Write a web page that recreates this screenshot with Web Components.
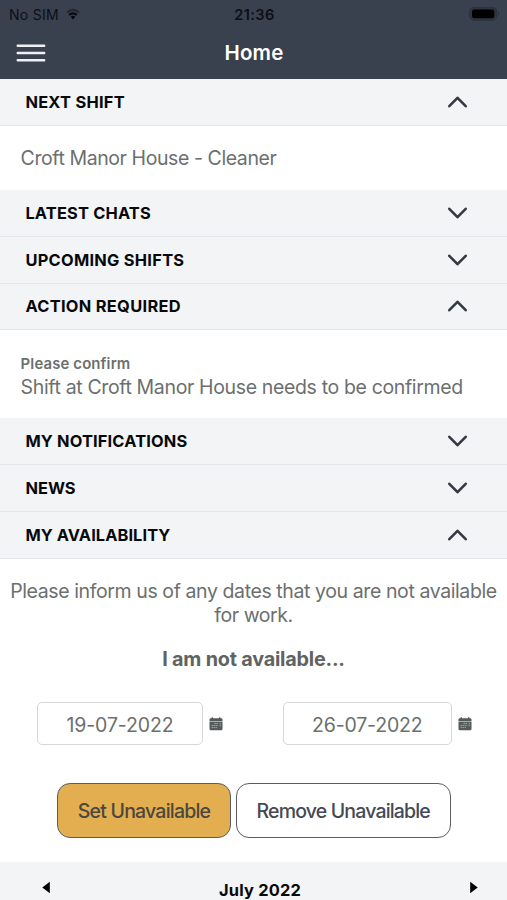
<!DOCTYPE html>
<html lang="en">
<head>
<meta charset="utf-8">
<title>Home</title>
<style>
html,body{margin:0;height:100%;background:#fff}
body{height:900px;overflow:hidden;font-family:Inter,"Liberation Sans",sans-serif;color:#6b6f6e}
</style>
</head>
<body>
<home-screen></home-screen>
<script>
function define(name, html, ready) {
  const t = document.createElement('template');
  t.innerHTML = html;
  customElements.define(name, class extends HTMLElement {
    connectedCallback() {
      if (this.shadowRoot) return;
      this.attachShadow({mode: 'open'}).append(t.content.cloneNode(true));
      if (ready) ready.call(this, this.shadowRoot);
    }
  });
}

// One line of text, tracked so that it fills the width given in "w".
define('text-line', `<style>
:host{display:block;white-space:nowrap;flex:none}
span{display:inline-block}
</style><span><slot></slot></span>`, function (root) {
  const s = root.querySelector('span'), w = +this.getAttribute('w');
  if (!w) return;
  const step = (w - s.getBoundingClientRect().width) / this.textContent.length;
  s.style.letterSpacing = step.toFixed(3) + 'px';
});

define('status-bar', `<style>
:host{display:grid;grid-template-columns:1fr auto 1fr;align-items:center;height:28px;padding:0 7px 0 9px;color:#0c0f16;font-size:14px}
.l{display:flex;align-items:center;gap:7px}
.time{font-weight:600;font-size:14.5px}
.bat{justify-self:end;display:block}
svg{display:block}
</style>
<div class="l"><text-line w="50">No SIM</text-line>
<svg width="14" height="12" viewBox="0 0 14 12"><path d="M1 4.6Q7-.8 13 4.6" fill="none" stroke="#202633" stroke-width="2"/><path d="M3.1 7Q7 3.6 10.9 7" fill="none" stroke="#05070b" stroke-width="2.2"/><path d="M4.7 8.7Q7 7 9.3 8.7L7 11.4Z" fill="#05070b"/></svg></div>
<text-line class="time" w="40.5">21:36</text-line>
<svg class="bat" width="31" height="15" viewBox="0 0 31 15"><rect x=".7" y=".2" width="27" height="13" rx="4.2" fill="#2e3440" stroke="#2b313d"/><rect x="3" y="2.4" width="22.3" height="8.8" rx="2.2" fill="#000"/><path d="M29 4.5Q30.8 6.7 29 8.9Z" fill="#262c37"/></svg>`);

define('title-bar', `<style>
:host{display:grid;grid-template-columns:1fr auto 1fr;align-items:center;height:49px;padding:0 15px 0 16px;box-sizing:border-box;color:#fff;font-size:20.5px;font-weight:600}
svg{display:block}
</style>
<svg width="30" height="20" viewBox="0 0 30 20"><path d="M1.7 2.8H28.2M1.7 10H28.2M1.7 17.3H28.2" stroke="#eef0f4" stroke-width="2.4" stroke-linecap="round"/></svg>
<text-line w="59">Home</text-line>`);

define('section-row', `<style>
:host{display:flex;align-items:center;justify-content:space-between;height:47px;box-sizing:border-box;padding:0 39px 1px 25.4px;background:#f2f4f6;border-bottom:1px solid #e4e7e9;color:#08090b;font-size:16.4px;font-weight:650}
svg{display:block}
:host([open]) svg{transform:scaleY(-1)}
</style>
<text-line></text-line>
<svg width="21" height="14" viewBox="0 0 21 14"><path d="M2.3 2.8L10.5 11.2L18.7 2.8" fill="none" stroke="#343943" stroke-width="2.6" stroke-linecap="round" stroke-linejoin="round"/></svg>`, function (root) {
  const line = document.createElement('text-line');
  line.setAttribute('w', this.getAttribute('w'));
  line.textContent = this.getAttribute('label');
  root.querySelector('text-line').replaceWith(line);
});

define('section-body', `<style>
:host{display:block;box-sizing:border-box;background:#fff;padding:0 20px;font-size:19.5px;line-height:24px}
</style><slot></slot>`);

define('date-field', `<style>
:host{display:flex;align-items:center;gap:6px}
.box{box-sizing:border-box;width:var(--w);height:43px;border:1.5px solid #d5d7d8;border-radius:5px;display:flex;align-items:center;justify-content:center;padding-top:3px;font-size:19.5px}
svg{display:block;margin-top:1px}
</style><div class="box"><slot></slot></div>
<svg width="14" height="14" viewBox="0 0 14 14"><path d="M1.8 1.3H12.2Q13.5 1.3 13.5 2.6V4H.5V2.6Q.5 1.3 1.8 1.3Z" fill="#555b5b"/><path d="M3.3.3V2M10.7.3V2" stroke="#555b5b" stroke-width="1.4"/><path d="M.5 4.4H13.5V11.9Q13.5 13.2 12.2 13.2H1.8Q.5 13.2 .5 11.9Z" fill="#555b5b"/><path d="M5.5 6.4H9.2M2.6 8.4H9.2M2.6 10.4H8M11.2 5.8V9.5" stroke="#a0a5a5" stroke-width="1" stroke-dasharray="1.5 .5"/></svg>`);

define('pill-button', `<style>
:host{display:flex;align-items:center;justify-content:center;box-sizing:border-box;width:var(--w);height:55px;border:1.5px solid #5b5d61;border-radius:13px;background:#fff;color:#454953;font-size:19.5px;font-weight:450;padding-top:1px}
:host([primary]){background:#e2ae50;color:#4c473d}
</style><slot></slot>`);

define('month-bar', `<style>
:host{display:grid;grid-template-columns:1fr auto 1fr;height:38px;box-sizing:border-box;padding:0 29px 0 42px;background:#f2f4f5;color:#08090b;font-size:16.4px;font-weight:650}
svg{display:block;margin-top:19px}
.next{justify-self:end}
text-line{padding-top:18px;line-height:20px}
</style>
<svg width="8" height="13" viewBox="0 0 8 13"><path d="M7.8 .7V12.3L.3 6.5Z" fill="#000"/></svg>
<text-line w="82">July 2022</text-line>
<svg class="next" width="8" height="13" viewBox="0 0 8 13"><path d="M.2 .7V12.3L7.7 6.5Z" fill="#000"/></svg>`);

define('home-screen', `<style>
:host{display:flex;flex-direction:column;width:507px;height:900px;overflow:hidden}
header{background:#39414e;height:79px;flex:none}
section-row,section-body,month-bar{flex:none}
.next{height:64px;padding:20px 20.6px 0}
.action{height:88px;padding:23px 20.6px 0}
.action .small{font-size:14.9px;font-weight:600;line-height:22px}
.avail{height:303px;padding:20px 0 0;display:flex;flex-direction:column;align-items:center}
.strong{font-weight:650;font-size:19.8px;margin-top:20px;color:#5f6362}
.dates{display:flex;gap:60px;margin-top:31px;align-self:flex-start;padding-left:37px}
.buttons{display:flex;gap:5px;margin-top:38px;align-self:flex-start;padding-left:57px}
</style>
<header><status-bar></status-bar><title-bar></title-bar></header>
<section-row open label="NEXT SHIFT" w="99.5"></section-row>
<section-body class="next"><text-line w="255.8">Croft Manor House - Cleaner</text-line></section-body>
<section-row label="LATEST CHATS" w="125.5"></section-row>
<section-row label="UPCOMING SHIFTS" w="159"></section-row>
<section-row open label="ACTION REQUIRED" w="155.5" style="height:46px"></section-row>
<section-body class="action"><text-line class="small" w="109.8">Please confirm</text-line><text-line w="442.2">Shift at Croft Manor House needs to be confirmed</text-line></section-body>
<section-row label="MY NOTIFICATIONS" w="162"></section-row>
<section-row label="NEWS" w="50.2"></section-row>
<section-row open label="MY AVAILABILITY" w="145"></section-row>
<section-body class="avail">
<text-line w="486.5">Please inform us of any dates that you are not available</text-line>
<text-line w="78.5">for work.</text-line>
<text-line class="strong" w="182.5">I am not available...</text-line>
<div class="dates"><date-field style="--w:166px"><text-line w="107">19-07-2022</text-line></date-field><date-field style="--w:168.5px"><text-line w="110.5">26-07-2022</text-line></date-field></div>
<div class="buttons"><pill-button primary style="--w:174px"><text-line w="132.5">Set Unavailable</text-line></pill-button><pill-button style="--w:214.5px"><text-line w="173.5">Remove Unavailable</text-line></pill-button></div>
</section-body>
<month-bar></month-bar>`);
</script>
</body>
</html>
